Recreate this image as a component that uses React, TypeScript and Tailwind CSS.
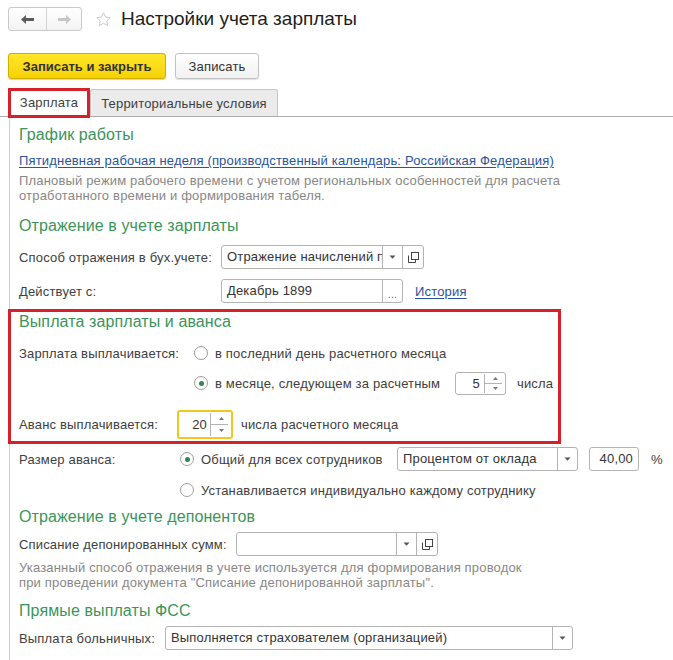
import clsx from "clsx";
import type { ReactNode } from "react";

// form colours
const GREEN = "text-[#3b945a]";
const BORDER = "border-[#b3b3b3]";

function Heading({ children, className }: { children: ReactNode; className?: string }) {
  return <div className={clsx("text-[16px] leading-[20px] tracking-[0.1px]", GREEN, className)}>{children}</div>;
}

function Caret() {
  return (
    <svg width="7" height="4" viewBox="0 0 7 4">
      <path d="M0.5 0.5h6L3.5 3.8z" fill="#555" />
    </svg>
  );
}

function OpenIcon() {
  return (
    <svg width="11" height="11" viewBox="0 0 11 11" fill="none" stroke="#444" strokeWidth="1">
      <rect x="3.5" y="0.5" width="7" height="7" />
      <path d="M0.5 3.5v7h7v-3" />
    </svg>
  );
}

function Btn({ children, className }: { children: ReactNode; className?: string }) {
  return (
    <div className={clsx("flex items-center justify-center border-l h-full shrink-0", BORDER, className)}>
      {children}
    </div>
  );
}

function Field({
  text,
  className,
  caret,
  open,
  dots,
}: {
  text?: string;
  className: string;
  caret?: boolean;
  open?: boolean;
  dots?: boolean;
}) {
  return (
    <div className={clsx("flex h-[24px] border rounded-[3px] bg-white shrink-0", BORDER, className)}>
      <div className="flex-1 min-w-0 overflow-hidden whitespace-nowrap pl-[5px] pr-[2px] leading-[22px] text-[#333]">
        {text}
      </div>
      {dots && (
        <Btn className="w-[20px] text-[#666] text-[11px] leading-none pt-[6px]">...</Btn>
      )}
      {caret && (
        <Btn className="w-[20px]">
          <Caret />
        </Btn>
      )}
      {open && (
        <Btn className="w-[21px]">
          <OpenIcon />
        </Btn>
      )}
    </div>
  );
}

function Spin({ value, className, textCls }: { value: string; className: string; textCls: string }) {
  return (
    <div className={clsx("flex bg-white rounded-[3px] shrink-0", className)}>
      <div className={clsx("flex-1 text-right text-[#333]", textCls)}>{value}</div>
      <div className="w-[21px] flex flex-col border-l border-[#b3b3b3] my-[1px]">
        <div className="flex-1 flex items-center justify-center">
          <svg width="5" height="3" viewBox="0 0 5 3">
            <path d="M0 3h5L2.5 0z" fill="#777" />
          </svg>
        </div>
        <div className="border-t border-[#b3b3b3] mr-[3px]" />
        <div className="flex-1 flex items-center justify-center">
          <svg width="5" height="3" viewBox="0 0 5 3">
            <path d="M0 0h5L2.5 3z" fill="#777" />
          </svg>
        </div>
      </div>
    </div>
  );
}

function Radio({ checked }: { checked?: boolean }) {
  return (
    <span className="w-[14px] h-[14px] rounded-full border border-[#a0a0a0] bg-white flex items-center justify-center shrink-0 shadow-[inset_0_1px_1px_rgba(0,0,0,0.06)]">
      {checked && <span className="w-[5px] h-[5px] rounded-full bg-[#2d8a4c]" />}
    </span>
  );
}

function Choice({ checked, label, className }: { checked?: boolean; label: string; className?: string }) {
  return (
    <div className={clsx("flex items-center gap-[7px] shrink-0", className)}>
      <Radio checked={checked} />
      <span>{label}</span>
    </div>
  );
}

export default function App() {
  return (
    <div className="w-[673px] h-[660px] bg-white overflow-hidden flex flex-col font-['Liberation_Sans',Arial,sans-serif] text-[13px] leading-[15px] tracking-[0.17px] text-[#404040]">
      {/* header */}
      <div className="flex items-center pt-[7px] pl-[8px]">
        <div className="flex w-[74px] h-[24px] border border-[#c9c9c9] rounded-[3px] bg-linear-to-b from-white to-[#f3f3f3]">
          <div className="w-[38px] flex items-center justify-center border-r border-[#d4d4d4]">
            <svg width="13" height="9" viewBox="0 0 13 9">
              <path d="M0 4.5L5 0v3h8v3H5v3z" fill="#5c5c5c" />
            </svg>
          </div>
          <div className="flex-1 flex items-center justify-center">
            <svg width="13" height="9" viewBox="0 0 13 9">
              <path d="M13 4.5L8 0v3H0v3h8v3z" fill="#c6c6c6" />
            </svg>
          </div>
        </div>
        <svg className="ml-[13px]" width="17" height="17" viewBox="0 0 24 24" fill="none" stroke="#c9c9c9" strokeWidth="1.4">
          <path d="M12 2.5l2.9 6.1 6.6.8-4.9 4.6 1.3 6.6L12 17.3l-5.9 3.3 1.3-6.6-4.9-4.6 6.6-.8z" />
        </svg>
        <div className="ml-[9px] text-[19px] leading-[24px] tracking-normal text-[#1e1e1e]">Настройки учета зарплаты</div>
      </div>

      {/* command bar */}
      <div className="flex gap-[9px] pl-[8px] mt-[22px]">
        <div className="w-[158px] h-[26px] flex items-center justify-center rounded-[3px] border border-[#d2ad00] bg-linear-to-b from-[#ffe626] to-[#f6d200] shadow-[0_1px_1px_rgba(0,0,0,0.18)] font-bold tracking-normal text-[#333]">
          Записать и закрыть
        </div>
        <div className="w-[84px] h-[26px] flex items-center justify-center rounded-[3px] border border-[#c2c2c2] bg-linear-to-b from-white to-[#f1f1f1] shadow-[0_1px_1px_rgba(0,0,0,0.12)] text-[#333]">
          Записать
        </div>
      </div>

      {/* tabs */}
      <div className="flex items-end h-[29px] mt-[9px] pl-[8px] border-b border-[#ababab]">
        <div className="relative z-10 w-[82px] h-[30px] -mb-[2px] bg-white border-[3px] border-[#d6202a] flex items-center justify-center pb-[1px]">
          Зарплата
        </div>
        <div className="w-[188px] h-[27px] bg-[#ebebeb] border border-b-0 border-[#c6c6c6] rounded-t-[3px] flex items-center justify-center">
          Территориальные условия
        </div>
      </div>

      {/* panel */}
      <div className="flex-1 ml-[9px] border-l border-[#cdcdcd] pl-[9px]">
        <Heading className="mt-[8px]">График работы</Heading>
        <div className="mt-[8px] text-[#2a549c] underline underline-offset-2 whitespace-nowrap">
          Пятидневная рабочая неделя (производственный календарь: Российская Федерация)
        </div>
        <div className="mt-[5px] text-[#878787]">
          <div>Плановый режим рабочего времени с учетом региональных особенностей для расчета</div>
          <div>отработанного времени и формирования табеля.</div>
        </div>

        <Heading className="mt-[13px]">Отражение в учете зарплаты</Heading>
        <div className="flex items-center mt-[9px]">
          <div className="w-[202px]">Способ отражения в бух.учете:</div>
          <Field className="w-[203px]" text="Отражение начислений по умолчанию" caret open />
        </div>
        <div className="flex items-center mt-[10px]">
          <div className="w-[202px]">Действует с:</div>
          <Field className="w-[182px]" text="Декабрь 1899" dots />
          <span className="ml-[12px] text-[#2a549c] underline underline-offset-2">История</span>
        </div>

        <div className="mt-[6px] -ml-[11px] w-[553px] border-[3px] border-[#d6202a] pl-[8px] pb-[2px]">
          <Heading>Выплата зарплаты и аванса</Heading>
          <div className="flex items-center h-[20px] mt-[11px]">
            <div className="w-[175px]">Зарплата выплачивается:</div>
            <Choice label="в последний день расчетного месяца" />
          </div>
          <div className="flex items-center h-[24px] mt-[8px] pl-[175px]">
            <Choice checked label="в месяце, следующем за расчетным" className="w-[261px]" />
            <Spin value="5" className="w-[51px] h-[23px] border border-[#b3b3b3]" textCls="leading-[21px] pr-[4px]" />
            <span className="ml-[11px]">числа</span>
          </div>
          <div className="flex items-center h-[29px] mt-[15px]">
            <div className="w-[158px]">Аванс выплачивается:</div>
            <Spin value="20" className="w-[56px] h-[29px] border-2 border-[#f2c81f]" textCls="leading-[25px] pr-[3px]" />
            <span className="ml-[8px]">числа расчетного месяца</span>
          </div>
        </div>

        <div className="flex items-center mt-[3px]">
          <div className="w-[161px]">Размер аванса:</div>
          <Choice checked label="Общий для всех сотрудников" className="w-[217px]" />
          <Field className="w-[181px]" text="Процентом от оклада" caret />
          <div className="ml-[11px] w-[50px] h-[24px] border border-[#b3b3b3] rounded-[3px] text-right pr-[5px] leading-[22px] text-[#333]">
            40,00
          </div>
          <span className="ml-[12px]">%</span>
        </div>
        <div className="flex items-center h-[20px] mt-[9px] pl-[161px]">
          <Choice label="Устанавливается индивидуально каждому сотруднику" />
        </div>

        <Heading className="mt-[7px]">Отражение в учете депонентов</Heading>
        <div className="flex items-center mt-[5px]">
          <div className="w-[217px]">Списание депонированных сумм:</div>
          <Field className="w-[202px]" caret open />
        </div>
        <div className="mt-[4px] text-[#878787]">
          <div>Указанный способ отражения в учете используется для формирования проводок</div>
          <div>при проведении документа "Списание депонированной зарплаты".</div>
        </div>

        <Heading className="mt-[11px]">Прямые выплаты ФСС</Heading>
        <div className="flex items-center mt-[5px]">
          <div className="w-[146px]">Выплата больничных:</div>
          <Field className="w-[408px]" text="Выполняется страхователем (организацией)" caret />
        </div>
      </div>
    </div>
  );
}
